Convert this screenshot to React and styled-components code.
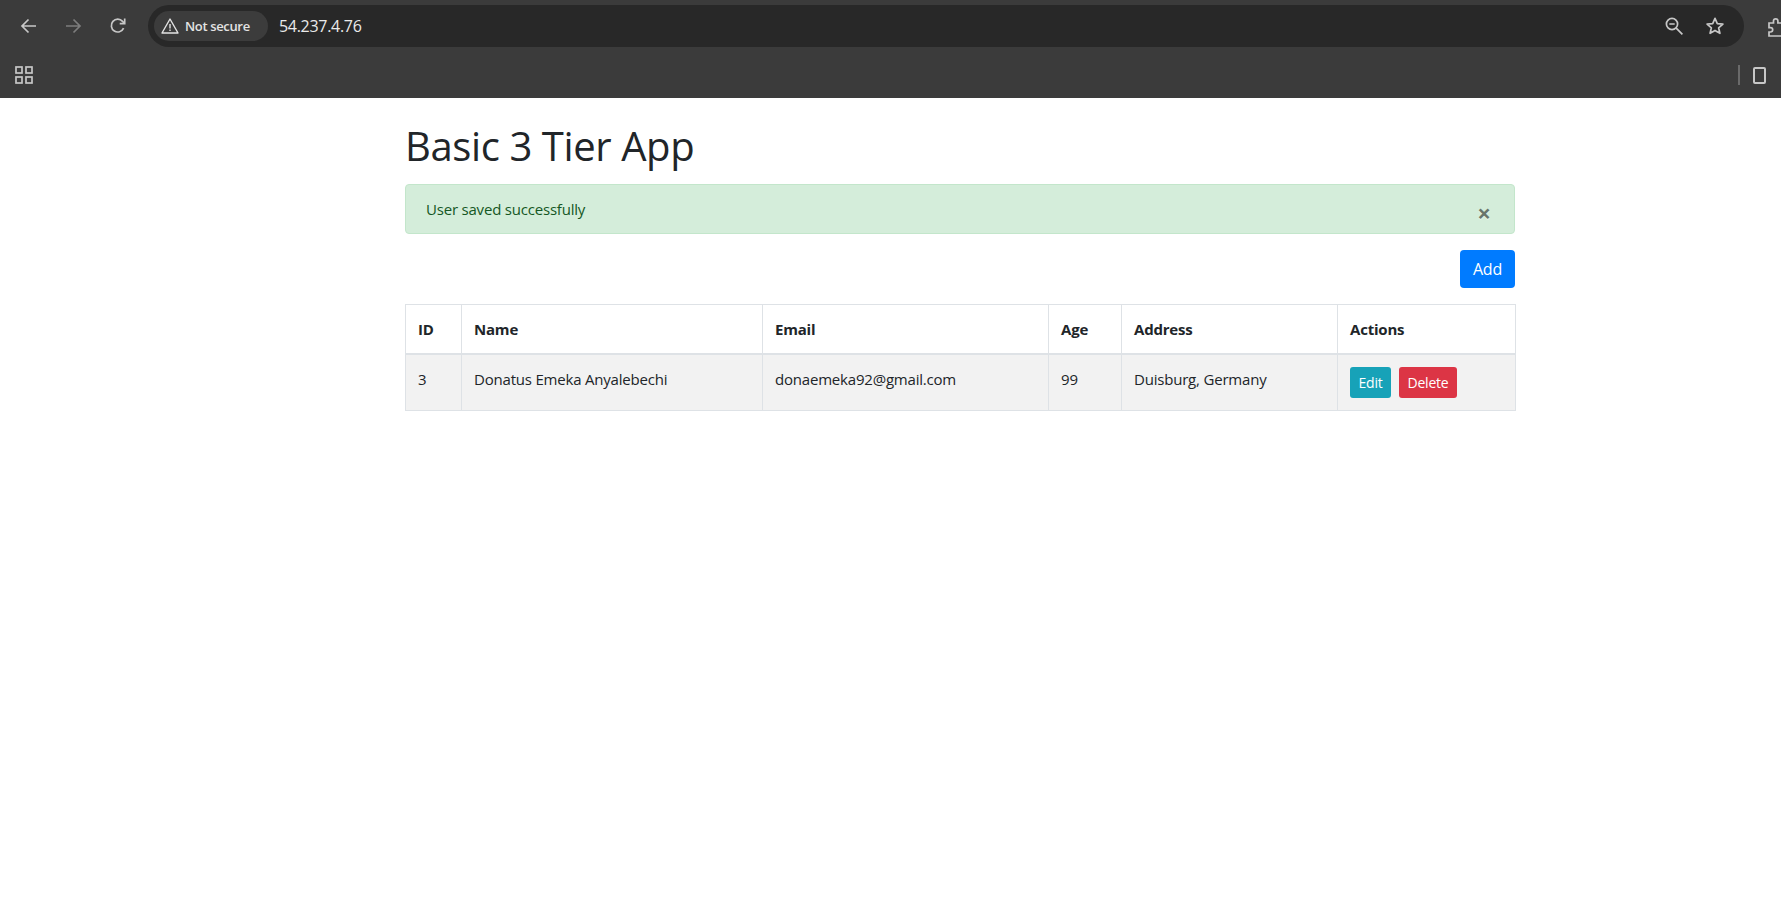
import styled, { createGlobalStyle } from "styled-components";

const GlobalStyle = createGlobalStyle`
  html, body {
    margin: 0;
    background: #fff;
    overflow: hidden;
  }
  #root {
    width: 1781px;
    height: 923px;
    overflow: hidden;
  }
`;

// the capture was cut from a wider window, so the page is laid out at 1920
const Frame = styled.div`
  width: 1920px;
  font-family: "Open Sans", "Noto Sans", sans-serif;
`;

const Chrome = styled.header`
  height: 98px;
  background: #3b3b3b;
  display: flex;
  flex-direction: column;
`;

const Toolbar = styled.div`
  height: 52px;
  padding: 5px 0 0 16px;
  box-sizing: border-box;
  display: flex;
  align-items: flex-start;
`;

const NavButton = styled.span`
  width: 24px;
  height: 42px;
  margin-right: 21px;
  display: flex;
  align-items: center;
  justify-content: center;
  color: ${(p) => (p.$dim ? "#7d7d7d" : "#c7c7c7")};
`;

const Omnibox = styled.div`
  width: 1596px;
  height: 42px;
  margin-left: -3px;
  padding: 0 6px;
  box-sizing: border-box;
  border-radius: 21px;
  background: #282828;
  display: flex;
  align-items: center;
`;

const SecurityChip = styled.span`
  width: 114px;
  height: 30px;
  box-sizing: border-box;
  padding-left: 6px;
  border-radius: 15px;
  background: #3c3c3c;
  color: #e3e3e3;
  display: flex;
  align-items: center;
  gap: 5px;
  font-size: 13px;
  font-weight: 600;
  letter-spacing: -0.35px;
`;

const Url = styled.span`
  margin-left: 11px;
  flex: 1;
  color: #eaeaea;
  font-size: 16px;
  letter-spacing: -0.3px;
`;

const OmniAction = styled.span`
  width: 20px;
  margin-right: ${(p) => p.$gap}px;
  display: flex;
  color: #c7c7c7;
`;

const ExtensionSlot = styled.span`
  margin: 12px 0 0 23px;
  display: flex;
  color: #c7c7c7;
`;

const BookmarkBar = styled.div`
  flex: 1;
  padding-left: 15px;
  display: flex;
  align-items: center;
  color: #c7c7c7;
`;

const BarSeparator = styled.span`
  width: 2px;
  height: 20px;
  margin-left: 1705px;
  background: #6a6a6a;
`;

const SideTab = styled.span`
  width: 9px;
  height: 13px;
  margin-left: 13px;
  border: 2px solid #c7c7c7;
  border-radius: 2px;
`;

const Container = styled.main`
  width: 1110px;
  margin: 0 auto;
  color: #212529;
`;

const Title = styled.h1`
  margin: 24px 0 14px;
  font-size: 40px;
  font-weight: 500;
  line-height: 48px;
  font-family: "Open Sans", sans-serif;
  letter-spacing: -0.4px;
`;

const Alert = styled.div`
  height: 50px;
  padding: 12px 20px;
  box-sizing: border-box;
  margin-bottom: 16px;
  border: 1px solid #c3e6cb;
  border-radius: 4px;
  background: #d4edda;
  color: #155724;
  font-size: 15px;
  line-height: 24px;
  display: flex;
  justify-content: space-between;
  letter-spacing: -0.2px;
`;

const CloseButton = styled.button`
  padding: 0;
  border: 0;
  background: none;
  color: #000;
  opacity: 0.5;
  margin: 4px 3px 0 0;
  font: 700 24px/24px "Open Sans", sans-serif;
  text-shadow: 0 1px 0 #fff;
`;

const Actions = styled.div`
  display: flex;
  justify-content: flex-end;
  margin-bottom: 16px;
`;

const Button = styled.button`
  height: ${(p) => (p.$small ? 31 : 38)}px;
  width: ${(p) => p.$width}px;
  padding: 0;
  border: 0;
  border-radius: ${(p) => (p.$small ? 3 : 4)}px;
  background: ${(p) => p.$bg};
  color: #fff;
  font-family: "Open Sans", sans-serif;
  font-size: ${(p) => (p.$small ? 14 : 16)}px;
  letter-spacing: -0.2px;
`;

const Table = styled.table`
  width: 1110px;
  table-layout: fixed;
  border-collapse: collapse;
  font-size: 15px;
`;

const Head = styled.th`
  width: ${(p) => p.$w}px;
  height: 49px;
  padding: 0 12px;
  box-sizing: border-box;
  border: 1px solid #dee2e6;
  border-bottom-width: 2px;
  text-align: left;
  font-weight: 700;
  letter-spacing: -0.2px;
`;

const Row = styled.tr`
  background: #f2f2f2;
`;

const Cell = styled.td`
  height: 55px;
  padding: 12px 12px;
  box-sizing: border-box;
  border: 1px solid #dee2e6;
  vertical-align: top;
  line-height: 24px;
  letter-spacing: -0.2px;
`;

const ButtonGroup = styled.div`
  display: flex;
  gap: 8px;
  margin-top: 0;
`;

const ArrowIcon = ({ flip }) => (
  <svg width="17" height="16" viewBox="0 0 17 16" fill="none" stroke="currentColor" strokeWidth="1.7" style={flip ? { transform: "scaleX(-1)" } : undefined}>
    <path d="M16 8H2M8.5 1.5 2 8l6.5 6.5" />
  </svg>
);

const ReloadIcon = () => (
  <svg width="18" height="18" viewBox="0 0 18 18" fill="none" stroke="currentColor" strokeWidth="1.7">
    <path d="M14.6 11.2A6.4 6.4 0 1 1 13.6 4.4L15.5 6.3" />
    <path d="M15.7 1.6v5h-5" />
  </svg>
);

const WarningIcon = () => (
  <svg width="20" height="18" viewBox="0 0 20 18" fill="none" stroke="currentColor" strokeWidth="1.4">
    <path d="M10 2 18 16H2Z" strokeLinejoin="round" />
    <path d="M10 7v4.5M10 12.6v1.4" />
  </svg>
);

const ZoomOutIcon = () => (
  <svg width="20" height="20" viewBox="0 0 20 20" fill="none" stroke="currentColor" strokeWidth="1.7">
    <circle cx="8" cy="8" r="5.6" />
    <path d="M5.3 8h5.4M12.2 12.2l6.2 6.2" />
  </svg>
);

const StarIcon = () => (
  <svg width="20" height="20" viewBox="0 0 20 20" fill="none" stroke="currentColor" strokeWidth="1.7">
    <path d="m10 2.4 2.3 5.2 5.6.5-4.3 3.7 1.3 5.5-4.9-2.9-4.9 2.9 1.3-5.5-4.3-3.7 5.6-.5Z" strokeLinejoin="round" />
  </svg>
);

const ExtensionIcon = () => (
  <svg width="20" height="20" viewBox="0 0 20 20" fill="none" stroke="currentColor" strokeWidth="1.7">
    <path d="M2 6h4.5V4a2.2 2.2 0 0 1 4.4 0v2H15v4.5h2a2.2 2.2 0 0 1 0 4.4h-2V19H2v-4h1.5a2.2 2.2 0 0 0 0-4.4H2Z" />
  </svg>
);

const AppsIcon = () => (
  <svg width="18" height="18" viewBox="0 0 18 18" fill="none" stroke="currentColor" strokeWidth="1.7">
    <rect x="1" y="1" width="6" height="6" />
    <rect x="11" y="1" width="6" height="6" />
    <rect x="1" y="11" width="6" height="6" />
    <rect x="11" y="11" width="6" height="6" />
  </svg>
);

const columns = [
  ["ID", 56],
  ["Name", 301],
  ["Email", 286],
  ["Age", 73],
  ["Address", 216],
  ["Actions", 178],
];

export default function App() {
  return (
    <Frame>
      <GlobalStyle />
      <Chrome>
        <Toolbar>
          <NavButton><ArrowIcon /></NavButton>
          <NavButton $dim><ArrowIcon flip /></NavButton>
          <NavButton><ReloadIcon /></NavButton>
          <Omnibox>
            <SecurityChip>
              <WarningIcon />
              Not secure
            </SecurityChip>
            <Url>54.237.4.76</Url>
            <OmniAction $gap={21}><ZoomOutIcon /></OmniAction>
            <OmniAction $gap={13}><StarIcon /></OmniAction>
          </Omnibox>
          <ExtensionSlot><ExtensionIcon /></ExtensionSlot>
        </Toolbar>
        <BookmarkBar>
          <AppsIcon />
          <BarSeparator />
          <SideTab />
        </BookmarkBar>
      </Chrome>
      <Container>
        <Title>Basic 3 Tier App</Title>
        <Alert>
          User saved successfully
          <CloseButton>×</CloseButton>
        </Alert>
        <Actions>
          <Button $bg="#007bff" $width={55}>Add</Button>
        </Actions>
        <Table>
          <thead>
            <tr>
              {columns.map(([label, w]) => (
                <Head key={label} $w={w}>{label}</Head>
              ))}
            </tr>
          </thead>
          <tbody>
            <Row>
              <Cell>3</Cell>
              <Cell>Donatus Emeka Anyalebechi</Cell>
              <Cell>donaemeka92@gmail.com</Cell>
              <Cell>99</Cell>
              <Cell>Duisburg, Germany</Cell>
              <Cell>
                <ButtonGroup>
                  <Button $small $bg="#17a2b8" $width={41}>Edit</Button>
                  <Button $small $bg="#dc3545" $width={58}>Delete</Button>
                </ButtonGroup>
              </Cell>
            </Row>
          </tbody>
        </Table>
      </Container>
    </Frame>
  );
}
